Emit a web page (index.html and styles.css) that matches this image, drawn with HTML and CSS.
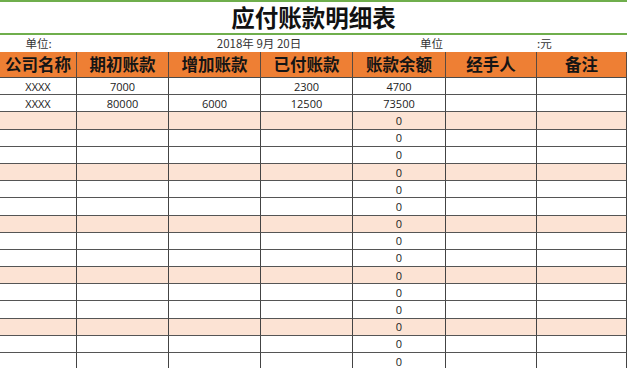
FILE: index.html
```html
<!DOCTYPE html>
<html lang="zh">
<head>
<meta charset="utf-8">
<link rel="stylesheet" href="styles.css">
</head>
<body>
<div class="sheet">
  <div class="title">应付账款明细表</div>
  <div class="info">
    <div class="c1">单位:</div>
    <div class="date">2018年 9月 20日</div>
    <div class="unit">单位</div>
    <div class="empty"></div>
    <div class="yuan">:元</div>
  </div>
  <div class="grid" id="grid">
    <div class="h">公司名称</div><div class="h">期初账款</div><div class="h">增加账款</div><div class="h">已付账款</div><div class="h">账款余额</div><div class="h">经手人</div><div class="h">备注</div>
  </div>
</div>
<script src="app.js"></script>
</body>
</html>
```

FILE: app.js
```js
const rows = [
  ["XXXX", "7000", "", "2300", "4700", "", ""],
  ["XXXX", "80000", "6000", "12500", "73500", "", ""]
];
for (let i = 0; i < 15; i++) rows.push(["", "", "", "", "0", "", ""]);
const grid = document.getElementById("grid");
rows.forEach((r, i) => {
  const peach = (i + 1) % 3 === 0;
  r.forEach(v => {
    const d = document.createElement("div");
    d.className = "d" + (peach ? " peach" : "");
    d.textContent = v;
    grid.appendChild(d);
  });
});
```

FILE: styles.css
```css
html, body {
  margin: 0;
  padding: 0;
  background: #fff;
  overflow: hidden;
}
.sheet {
  width: 627px;
  height: 368px;
  overflow: hidden;
  font-family: "Noto Sans CJK SC", "Noto Sans", sans-serif;
  color: #222;
}
.title {
  height: 31px;
  border-top: 2px solid #6fae4c;
  border-bottom: 2px solid #6fae4c;
  display: flex;
  align-items: center;
  justify-content: center;
  font-size: 23.5px;
  font-weight: 700;
  color: #111;
  letter-spacing: 0;
  line-height: 1;
}
.info {
  height: 17px;
  display: grid;
  grid-template-columns: 77px 92px 184px 93px 91px 90px;
  font-size: 11.5px;
  line-height: 17px;
  color: #333;
}
.info .c1 { text-align: center; }
.info .date { grid-column: 3 / 4; text-align: center; padding-right: 4px; }
.info .unit { text-align: right; padding-right: 3px; }
.info .yuan { text-align: left; padding-left: 0; }
.grid {
  display: grid;
  grid-template-columns: 77px 92px 92px 92px 93px 91px 90px;
  grid-auto-rows: 17.2px;
  grid-template-rows: 26px;
}
.h {
  background: #ee7f34;
  font-weight: 700;
  font-size: 16.5px;
  color: #151515;
  display: flex;
  align-items: center;
  justify-content: center;
  border-right: 1px solid #5a4a40;
  border-bottom: 1px solid #4a4a4a;
  line-height: 1;
}
.d {
  border-right: 1px solid #444;
  border-bottom: 1px solid #555;
  font-family: "Open Sans", "Liberation Sans", sans-serif;
  font-size: 11px;
  color: #222;
  display: flex;
  align-items: center;
  justify-content: center;
  line-height: 1;
  box-sizing: border-box;
}
.peach { background: #fce3d4; }
.h, .d { box-sizing: border-box; }
```
